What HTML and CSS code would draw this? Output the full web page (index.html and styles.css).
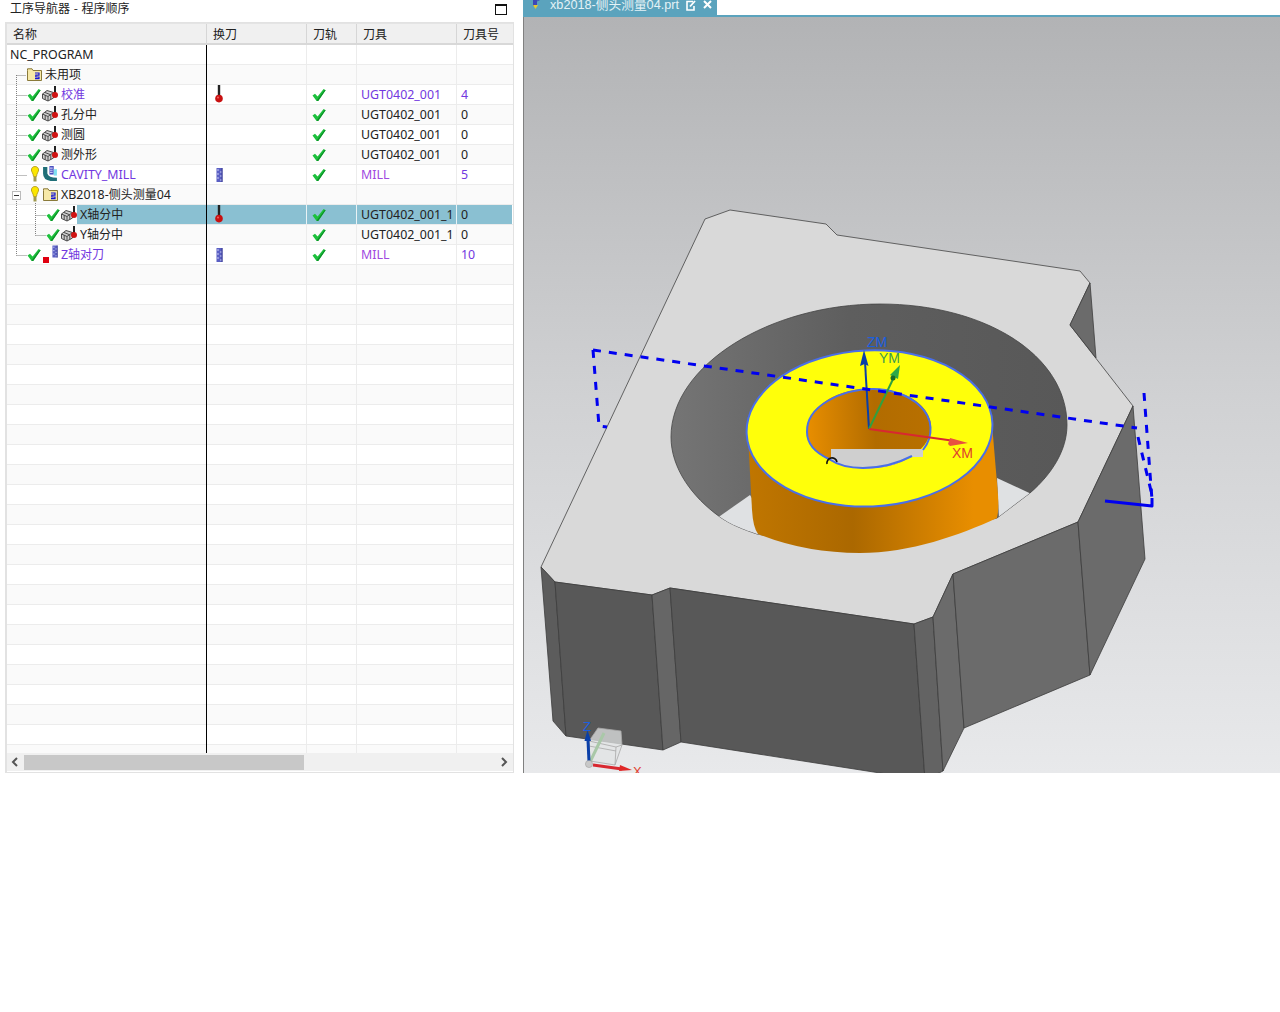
FILE: index.html
```html
<!DOCTYPE html>
<html lang="zh">
<head>
<meta charset="utf-8">
<title>工序导航器 - 程序顺序</title>
<link rel="stylesheet" href="styles.css">
</head>
<body>
<svg class="defs" width="0" height="0" aria-hidden="true">
  <defs>
    <symbol id="check" viewBox="0 0 14 14"><path d="M0.5 7.5 L3 5.8 L5.6 8.6 L11.6 1 L13.6 2.2 L6.2 13 L4.6 13 Z" fill="#1cc13c"/><path d="M4.6 13 L6.2 13 L13.6 2.2 L12.8 1.7 L5.6 11.2 Z" fill="#0c8f28"/></symbol>
    <symbol id="opcube" viewBox="0 0 16 16">
      <path d="M0.5 8 L5 4.5 L11.5 6.5 L11.5 12 L6 15 L0.5 12.5 Z" fill="#cfcfcf" stroke="#4a4a4a" stroke-width="1"/>
      <path d="M0.5 8 L6 10.5 L11.5 6.5 M6 10.5 L6 15 M3 6.5 L8.5 8.7 M3.2 9.2 L3.2 13.7 M8.8 8.6 L8.8 13.5" fill="none" stroke="#4a4a4a" stroke-width="1"/>
      <rect x="12" y="0" width="2" height="7" fill="#222"/>
      <circle cx="13" cy="9" r="3" fill="#d01414"/>
    </symbol>
    <symbol id="probe" viewBox="0 0 8 18"><rect x="2.8" y="0" width="2.4" height="11" fill="#222"/><circle cx="4" cy="13.6" r="3.8" fill="#c81010"/><circle cx="3" cy="12.6" r="1" fill="#f06060"/></symbol>
    <symbol id="mill" viewBox="0 0 7 14"><rect x="0.5" y="0" width="6" height="14" fill="#5a5fc4"/><path d="M1 2 H3 M4 4 H6 M1 6 H3 M4 8 H6 M1 10 H3 M4 12 H6" stroke="#c8ccf4" stroke-width="1"/><rect x="5.5" y="0" width="1" height="14" fill="#3c3f90"/></symbol>
    <symbol id="folder" viewBox="0 0 15 13"><path d="M0.5 2.5 L0.5 0.8 L5 0.8 L6 2.5 L14.5 2.5 L14.5 12.5 L0.5 12.5 Z" fill="#f7e9a8" stroke="#8a7a3a"/><path d="M8 5 H12 V7.2 H8.8 V9 H12 V10.6 H8" fill="none" stroke="#1414d8" stroke-width="1.2"/></symbol>
    <symbol id="bulb" viewBox="0 0 8 16"><path d="M4 0.5 C6.6 0.5 7.6 2.4 7.6 4 C7.6 6 5.8 7 5.5 10.5 L2.5 10.5 C2.2 7 0.4 6 0.4 4 C0.4 2.4 1.4 0.5 4 0.5 Z" fill="#fbe600" stroke="#a89018" stroke-width="0.8"/><rect x="2.5" y="11" width="3" height="4.5" fill="#a09a50"/></symbol>
    <symbol id="cavity" viewBox="0 0 15 15"><path d="M1 1 L5 1 L5 7 Q6 11 14 11 L14 14 L8 14 Q1 13 1 7 Z" fill="#1f6f78"/><rect x="7" y="0" width="4" height="8" fill="#4a50c0"/><path d="M7.5 2 H10 M7.5 4 H10 M7.5 6 H10" stroke="#c8ccf4"/><rect x="11" y="3" width="3" height="6" fill="#7fe0f0"/></symbol>
  </defs>
</svg>

<main class="app">
  <section class="navigator">
    <header class="nav-title">
      <span class="nav-title-text">工序导航器 - 程序顺序</span>
      <span class="maximize"></span>
    </header>
    <div class="grid">
      <div class="head row-cols">
        <div>名称</div><div>换刀</div><div>刀轨</div><div>刀具</div><div>刀具号</div>
      </div>
      <div class="rows">
        <svg class="tree-lines" width="40" height="220" aria-hidden="true">
          <path d="M9.5 30 V210.5 M9.5 30.5 H19 M9.5 50.5 H20 M9.5 70.5 H20 M9.5 90.5 H20 M9.5 110.5 H20 M9.5 130.5 H20 M9.5 210.5 H20 M28.5 158 V190.5 M28.5 170.5 H39 M28.5 190.5 H39" fill="none" stroke="#808080" stroke-dasharray="1 1"/>
        </svg>
        <span class="expander"></span>

        <div class="row row-cols"><div class="name root"><span class="label">NC_PROGRAM</span></div><div></div><div></div><div></div><div></div></div>
        <div class="row row-cols"><div class="name unused"><svg class="ic-folder"><use href="#folder"/></svg><span class="label cjk">未用项</span></div><div></div><div></div><div></div><div></div></div>
        <div class="row row-cols"><div class="name lvl2"><svg class="ic-check"><use href="#check"/></svg><svg class="ic-op"><use href="#opcube"/></svg><span class="label cjk purple">校准</span></div><div class="tc"><svg class="ic-probe"><use href="#probe"/></svg></div><div class="pc"><svg class="ic-check"><use href="#check"/></svg></div><div class="txt purple">UGT0402_001</div><div class="txt purple">4</div></div>
        <div class="row row-cols"><div class="name lvl2"><svg class="ic-check"><use href="#check"/></svg><svg class="ic-op"><use href="#opcube"/></svg><span class="label cjk">孔分中</span></div><div></div><div class="pc"><svg class="ic-check"><use href="#check"/></svg></div><div class="txt">UGT0402_001</div><div class="txt">0</div></div>
        <div class="row row-cols"><div class="name lvl2"><svg class="ic-check"><use href="#check"/></svg><svg class="ic-op"><use href="#opcube"/></svg><span class="label cjk">测圆</span></div><div></div><div class="pc"><svg class="ic-check"><use href="#check"/></svg></div><div class="txt">UGT0402_001</div><div class="txt">0</div></div>
        <div class="row row-cols"><div class="name lvl2"><svg class="ic-check"><use href="#check"/></svg><svg class="ic-op"><use href="#opcube"/></svg><span class="label cjk">测外形</span></div><div></div><div class="pc"><svg class="ic-check"><use href="#check"/></svg></div><div class="txt">UGT0402_001</div><div class="txt">0</div></div>
        <div class="row row-cols"><div class="name lvl2"><span class="slot"><svg class="ic-bulb"><use href="#bulb"/></svg></span><svg class="ic-op"><use href="#cavity"/></svg><span class="label purple">CAVITY_MILL</span></div><div class="tc"><svg class="ic-mill"><use href="#mill"/></svg></div><div class="pc"><svg class="ic-check"><use href="#check"/></svg></div><div class="txt purple2">MILL</div><div class="txt purple">5</div></div>
        <div class="row row-cols"><div class="name lvl2"><span class="slot"><svg class="ic-bulb"><use href="#bulb"/></svg></span><span class="ic-slot"><svg class="ic-folder"><use href="#folder"/></svg></span><span class="label mixed">XB2018-<span class="cjk">侧头测量</span>04</span></div><div></div><div></div><div></div><div></div></div>
        <div class="row row-cols selected"><div class="name lvl3"><svg class="ic-check"><use href="#check"/></svg><svg class="ic-op"><use href="#opcube"/></svg><span class="label mixed fill">X<span class="cjk">轴分中</span></span></div><div class="tc"><svg class="ic-probe"><use href="#probe"/></svg></div><div class="pc"><svg class="ic-check"><use href="#check"/></svg></div><div class="txt">UGT0402_001_1</div><div class="txt">0</div></div>
        <div class="row row-cols"><div class="name lvl3"><svg class="ic-check"><use href="#check"/></svg><svg class="ic-op"><use href="#opcube"/></svg><span class="label mixed">Y<span class="cjk">轴分中</span></span></div><div></div><div class="pc"><svg class="ic-check"><use href="#check"/></svg></div><div class="txt">UGT0402_001_1</div><div class="txt">0</div></div>
        <div class="row row-cols"><div class="name lvl2"><svg class="ic-check"><use href="#check"/></svg><span class="zmark"><span class="red-square"></span><svg class="ic-mill-sm"><use href="#mill"/></svg></span><span class="label mixed purple">Z<span class="cjk">轴对刀</span></span></div><div class="tc"><svg class="ic-mill"><use href="#mill"/></svg></div><div class="pc"><svg class="ic-check"><use href="#check"/></svg></div><div class="txt purple2">MILL</div><div class="txt purple">10</div></div>

        <div class="row row-cols"><div class="name"></div><div></div><div></div><div></div><div></div></div>
        <div class="row row-cols"><div class="name"></div><div></div><div></div><div></div><div></div></div>
        <div class="row row-cols"><div class="name"></div><div></div><div></div><div></div><div></div></div>
        <div class="row row-cols"><div class="name"></div><div></div><div></div><div></div><div></div></div>
        <div class="row row-cols"><div class="name"></div><div></div><div></div><div></div><div></div></div>
        <div class="row row-cols"><div class="name"></div><div></div><div></div><div></div><div></div></div>
        <div class="row row-cols"><div class="name"></div><div></div><div></div><div></div><div></div></div>
        <div class="row row-cols"><div class="name"></div><div></div><div></div><div></div><div></div></div>
        <div class="row row-cols"><div class="name"></div><div></div><div></div><div></div><div></div></div>
        <div class="row row-cols"><div class="name"></div><div></div><div></div><div></div><div></div></div>
        <div class="row row-cols"><div class="name"></div><div></div><div></div><div></div><div></div></div>
        <div class="row row-cols"><div class="name"></div><div></div><div></div><div></div><div></div></div>
        <div class="row row-cols"><div class="name"></div><div></div><div></div><div></div><div></div></div>
        <div class="row row-cols"><div class="name"></div><div></div><div></div><div></div><div></div></div>
        <div class="row row-cols"><div class="name"></div><div></div><div></div><div></div><div></div></div>
        <div class="row row-cols"><div class="name"></div><div></div><div></div><div></div><div></div></div>
        <div class="row row-cols"><div class="name"></div><div></div><div></div><div></div><div></div></div>
        <div class="row row-cols"><div class="name"></div><div></div><div></div><div></div><div></div></div>
        <div class="row row-cols"><div class="name"></div><div></div><div></div><div></div><div></div></div>
        <div class="row row-cols"><div class="name"></div><div></div><div></div><div></div><div></div></div>
        <div class="row row-cols"><div class="name"></div><div></div><div></div><div></div><div></div></div>
        <div class="row row-cols"><div class="name"></div><div></div><div></div><div></div><div></div></div>
        <div class="row row-cols"><div class="name"></div><div></div><div></div><div></div><div></div></div>
        <div class="row row-cols"><div class="name"></div><div></div><div></div><div></div><div></div></div>
        <div class="row row-cols"><div class="name"></div><div></div><div></div><div></div><div></div></div>
        <div class="row row-cols"><div class="name"></div><div></div><div></div><div></div><div></div></div>
      </div>
      <div class="scrollbar">
        <span class="arrow">
          <svg width="8" height="10" viewBox="0 0 8 10"><path d="M6 1 L2 5 L6 9" fill="none" stroke="#555" stroke-width="2"/></svg>
        </span>
        <div class="track"><div class="thumb"></div></div>
        <span class="arrow">
          <svg width="8" height="10" viewBox="0 0 8 10"><path d="M2 1 L6 5 L2 9" fill="none" stroke="#555" stroke-width="2"/></svg>
        </span>
      </div>
    </div>
  </section>

  <section class="graphics">
    <div class="tabbar">
      <div class="tab">
        <svg class="tab-icon" width="14" height="15" viewBox="0 0 14 15"><rect x="3" y="0" width="4" height="10" fill="#3d47b8"/><path d="M7 2 L13 0 M7 5 L11 3" stroke="#3d47b8"/><path d="M3 9 H8 L5.5 13 Z" fill="#e8c830"/></svg>
        <span class="tab-name">xb2018-<span class="tab-cjk">侧头测量</span>04.prt</span>
        <svg class="tab-pop" width="10" height="11" viewBox="0 0 10 11"><path d="M7 1.5 H1 V10 H8 V6" fill="none" stroke="#fff" stroke-width="1.6"/><path d="M4 6.5 L9 1" stroke="#fff" stroke-width="1.8"/></svg>
        <svg class="tab-close" width="9" height="9" viewBox="0 0 9 9"><path d="M1 1 L8 8 M8 1 L1 8" stroke="#fff" stroke-width="2"/></svg>
      </div>
    </div>
    <div class="viewport">
      <svg class="scene" viewBox="524 17 756 756" width="756" height="756">
        <defs>
          <linearGradient id="wall" gradientUnits="userSpaceOnUse" x1="671" y1="0" x2="1067" y2="0"><stop offset="0" stop-color="#757575"/><stop offset="0.45" stop-color="#5e5e5e"/><stop offset="1" stop-color="#585858"/></linearGradient>
          <linearGradient id="bossSide" gradientUnits="userSpaceOnUse" x1="748" y1="0" x2="998" y2="0"><stop offset="0" stop-color="#c07600"/><stop offset="0.42" stop-color="#ab6800"/><stop offset="0.9" stop-color="#e88e00"/><stop offset="1" stop-color="#e88e00"/></linearGradient>
          <linearGradient id="bossHole" gradientUnits="userSpaceOnUse" x1="807" y1="0" x2="931" y2="0"><stop offset="0" stop-color="#e88e00"/><stop offset="0.55" stop-color="#b26c00"/><stop offset="1" stop-color="#b87000"/></linearGradient>
          <clipPath id="holeClip"><path d="M671 437 C671 365 770 304 880 304 C985 304 1067 355 1067 425 C1067 450 1052 474 1030 493 L997 518 L860 552 L757 534 C742 529 730 524 720 517 C692 497 671 468 671 437 Z"/></clipPath>
          <clipPath id="boreClip"><ellipse cx="869" cy="428.5" rx="62" ry="40" transform="rotate(-2.5 869 428)"/></clipPath>
        </defs>

        <polygon class="face-top" points="705,219 730,210 826,224 837,235 1080,271 1090,283 1070,325 1133,406 1078,522 953,574 933,617 914,624 670,588 652,595 555,582 541,567"/>
        <polygon class="face f-a" points="541,567 555,582 566,736 553,721"/>
        <polygon class="face f-b" points="555,582 652,595 663,750 566,736"/>
        <polygon class="face f-c" points="652,595 670,588 681,742 663,750"/>
        <polygon class="face f-b" points="670,588 914,624 925,780 681,742"/>
        <polygon class="face f-d" points="914,624 933,617 943,771 925,780"/>
        <polygon class="face f-e" points="933,617 953,574 964,728 943,771"/>
        <polygon class="face f-e" points="953,574 1078,522 1090,675 964,728"/>
        <polygon class="face f-e" points="1078,522 1133,406 1145,559 1090,675"/>
        <polygon class="face f-e" points="1090,283 1070,325 1096,358"/>

        <path class="hole" d="M671 437 C671 365 770 304 880 304 C985 304 1067 355 1067 425 C1067 450 1052 474 1030 493 L997 518 L860 552 L757 534 C742 529 730 524 720 517 C692 497 671 468 671 437 Z"/>
        <g clip-path="url(#holeClip)">
          <polygon class="through" points="700,530 750,495 790,560"/>
          <polygon class="through" points="997,478 1040,498 1000,540"/>
        </g>

        <path class="boss-side" d="M748 436 L752 510 Q753 527 758 534 Q805 553 860 553 C910 553 960 535 997 518 Q999 510 998 495 L992 424 Z"/>
        <ellipse class="boss-top" cx="869.5" cy="428.5" rx="123" ry="78" transform="rotate(-2.5 869 428)"/>
        <ellipse class="bore" cx="869" cy="428.5" rx="62" ry="40" transform="rotate(-2.5 869 428)"/>
        <g clip-path="url(#boreClip)">
          <polygon class="slab" points="831,449 923,449 923,457 914,480 831,480"/>
        </g>
        <rect class="slab" x="831" y="449" width="92" height="8"/>
        <path class="bore-rim" d="M912 456 Q889 468 863 468 Q842 468 829 459"/>
        <path class="bore-rim" d="M923 450 C934 436 933 418 920 406 C908 394 888 389 873 389 C842 389 806 406 807 432 C807 444 816 453 829 459"/>
        <path class="notch" d="M827 464 A5 5 0 0 1 837 462"/>

        <line class="ax-z" x1="869" y1="429" x2="865" y2="362"/>
        <path class="fill-z" d="M864 350 L868.5 366 L864.6 364 L860 366 Z"/>
        <line class="ax-y" x1="869" y1="429" x2="895" y2="375"/>
        <path class="fill-y" d="M900 365 L898 379 L890 375 Z"/>
        <circle class="fill-yd" cx="893" cy="378" r="2.5"/>
        <line class="ax-x" x1="869" y1="429" x2="955" y2="441"/>
        <path class="fill-x" d="M968 443 L950 438 L948 444 L950 446 Z"/>
        <text class="lbl lbl-z" x="867" y="347">ZM</text>
        <text class="lbl lbl-y" x="879" y="363">YM</text>
        <text class="lbl lbl-x" x="952" y="458">XM</text>

        <path class="dash" d="M593 350 L1137 428"/>
        <path class="dash" d="M593 350 L599 426 L607 427"/>
        <path class="dash" d="M1144 393 L1152 500"/>
        <path class="dash" d="M1138 437 L1152 495"/>
        <path class="solid" d="M1105 501 L1152 506 L1152 498"/>

        <g class="triad">
          <path class="cube" d="M598 728 L621 731 L622 745 L615 765 L590 761 L589 741 Z"/>
          <path class="cube-l" d="M589 741 L616 747 L622 745 M616 747 L615 765 M589 746 L616 751"/>
          <line class="t-y" x1="590" y1="762" x2="604" y2="733"/>
          <line class="ax-z2" x1="589" y1="762" x2="588" y2="740"/>
          <path class="fill-z" d="M587.5 730 L591 741 L584.5 741 Z"/>
          <line class="ax-x2" x1="593" y1="765" x2="622" y2="769"/>
          <path class="fill-x2" d="M632 770 L620 765 L619 771 Z"/>
          <circle class="ball" cx="589" cy="764" r="3.6"/>
          <text class="lbl-t lbl-z" x="583" y="731">Z</text>
          <text class="lbl-t lbl-x" x="633" y="776">X</text>
        </g>
      </svg>
    </div>
  </section>
</main>
</body>
</html>
```
FILE: styles.css
```css
* { box-sizing: border-box; }
html, body { margin: 0; padding: 0; background: #fff; }
body {
  font-family: "Noto Sans", "Noto Sans CJK SC", sans-serif;
  font-size: 12.4px;
  color: #222;
}
.defs { position: absolute; }
.app { display: flex; height: 773px; }

.navigator { width: 523px; display: flex; flex-direction: column; padding: 0 9px 0 5px; }
.nav-title { height: 22px; display: flex; align-items: flex-start; justify-content: space-between; padding: 0 7px 0 5px; }
.nav-title-text { font-family: "Noto Sans CJK SC", sans-serif; font-size: 12px; line-height: 16px; color: #222; word-spacing: 1px; }
.maximize { width: 12px; height: 11px; border: 1px solid #111; border-top-width: 2px; margin-top: 4px; }

.grid { flex: 1; min-height: 0; display: flex; flex-direction: column; border: 1px solid #e2e2e2; border-left-width: 2px; }
.row-cols { display: grid; grid-template-columns: 200px 100px 50px 100px 55px; }
.head { height: 22px; flex: none; background: #f0f0f0; border-top: 1px solid #e4e4e4; border-bottom: 2px solid #d8d8d8; font-family: "Noto Sans CJK SC", sans-serif; font-size: 12px; color: #222; }
.head > div { padding-left: 6px; line-height: 19px; border-right: 1px solid #d6d6d6; }
.head > div:last-child { border-right: 0; }

.rows { position: relative; flex: 1; min-height: 0; overflow: hidden; }
.rows::after { content: ""; position: absolute; left: 199px; top: 0; bottom: 0; width: 1px; background: #000; }
.row { height: 20px; border-bottom: 1px solid #ececec; background: #fff; line-height: 19px; }
.row:nth-of-type(even) { background: #fafafa; }
.row > div { height: 19px; border-right: 1px solid #ececec; white-space: nowrap; overflow: hidden; }
.row > div:last-child { border-right: 0; }
.row > .name { display: flex; align-items: center; }
.row > .tc, .row > .pc { display: flex; align-items: center; }
.tc { padding-left: 8px; }
.pc { padding-left: 5px; }
.txt { padding-left: 4px; }

.root { padding-left: 3px; }
.unused { padding-left: 20px; }
.lvl2 { padding-left: 20px; }
.lvl3 { padding-left: 39px; }
.label { padding-left: 3px; line-height: 19px; }
.root .label { padding-left: 0; }
.cjk { font-family: "Noto Sans CJK SC", sans-serif; font-size: 12px; }
.label.cjk, .label.mixed { margin-top: -2px; }
.purple { color: #7238e0; }
.purple2 { color: #a048e0; }
.selected, .row.selected:nth-of-type(even) { background: #fff; }
.selected > div:not(.name) { background: #8ac0d2; border-right-color: #e8f2f5; }
.selected .fill { flex: 1; background: #8ac0d2; height: 19px; margin-top: 0; line-height: 17px; }

.ic-check { width: 14px; height: 14px; flex: none; }
.ic-op { width: 16px; height: 16px; flex: none; margin: -2px 0 0 1px; }
.ic-slot { width: 17px; flex: none; display: flex; justify-content: flex-end; }
.ic-folder { width: 15px; height: 13px; flex: none; }
.ic-probe { width: 8px; height: 18px; flex: none; margin-top: -1px; }
.ic-mill { width: 7px; height: 14px; flex: none; margin-left: 1px; }
.ic-bulb { width: 8px; height: 16px; display: block; margin: -2px auto 0; }
.slot { width: 14px; flex: none; padding-left: 1px; }
.zmark { width: 17px; height: 19px; flex: none; display: flex; align-items: flex-end; }
.red-square { width: 6px; height: 6px; background: #e00010; margin: 0 3px 1px 2px; flex: none; }
.ic-mill-sm { width: 6px; height: 13px; flex: none; margin-bottom: 6px; }

.tree-lines { position: absolute; left: 0; top: 0; pointer-events: none; }
.expander { position: absolute; left: 5px; top: 146px; width: 9px; height: 9px; background: #fff; border: 1px solid #bbb; }
.expander::after { content: ""; position: absolute; left: 1px; top: 3px; width: 5px; height: 1px; background: #333; }

.scrollbar { flex: none; height: 18px; display: flex; align-items: center; background: #f0f0f0; margin-bottom: 1px; }
.arrow { width: 17px; height: 16px; flex: none; display: flex; align-items: center; justify-content: center; padding-right: 2px; }
.track { flex: 1; height: 15px; }
.thumb { width: 280px; height: 15px; background: #c8c8c8; }

.graphics { flex: 1; min-width: 0; display: flex; flex-direction: column; }
.tabbar { height: 17px; flex: none; border-bottom: 2px solid #5ba3bd; }
.tab { width: 194px; height: 15px; background: #5ba3bd; display: flex; align-items: center; overflow: hidden; }
.tab-icon { margin: -8px 0 0 7px; flex: none; }
.tab-name { margin-left: 6px; color: #e4f2f6; font-family: "Liberation Sans", "Noto Sans CJK SC", sans-serif; font-size: 12.7px; line-height: 13px; margin-top: -6px; white-space: nowrap; }
.tab-cjk { font-family: "Noto Sans CJK SC", sans-serif; }
.tab-pop { margin-left: 7px; flex: none; margin-top: -4px; }
.tab-close { margin-left: 7px; flex: none; margin-top: -6px; }

.viewport { flex: 1; min-height: 0; overflow: hidden; border-left: 1px solid #808080; background: linear-gradient(#b2b3b5, #d0d1d3 50%, #e8e9eb); }
.scene { display: block; overflow: hidden; }

.face-top { fill: #d9d9d9; stroke: #444; stroke-width: 0.8; stroke-linejoin: round; }
.face { stroke: #3c3c3c; stroke-width: 0.8; stroke-linejoin: round; }
.f-a { fill: #5c5c5c; }
.f-b { fill: #585858; }
.f-c { fill: #666; }
.f-d { fill: #636363; }
.f-e { fill: #6b6b6b; }
.hole { fill: url(#wall); stroke: #444; stroke-width: 0.8; }
.through { fill: #dfe1e3; }
.boss-side { fill: url(#bossSide); }
.boss-top { fill: #ffff0a; stroke: #4a6fe8; stroke-width: 2; }
.bore { fill: url(#bossHole); }
.slab { fill: #cfcfcf; }
.bore-rim { fill: none; stroke: #4a6fe8; stroke-width: 2; }
.notch { fill: none; stroke: #111; stroke-width: 1.6; }

.ax-z, .ax-z2 { stroke: #0a3fa8; stroke-width: 2; }
.ax-y { stroke: #30a040; stroke-width: 2; }
.ax-x, .ax-x2 { stroke: #d82830; stroke-width: 2; }
.ax-x2 { stroke-width: 3; }
.ax-z2 { stroke-width: 3; }
.fill-z { fill: #0a3fa8; }
.fill-y { fill: #30a848; }
.fill-yd { fill: #1c6a28; }
.fill-x { fill: #e85040; }
.fill-x2 { fill: #e02828; }
.lbl, .lbl-t { font-family: "Liberation Sans", sans-serif; font-size: 14px; }
.lbl-t { font-size: 13px; }
.lbl-z { fill: #1a5fe0; }
.lbl-y { fill: #3c9a50; }
.lbl-x { fill: #e04030; }
.dash { fill: none; stroke: #0000f0; stroke-width: 3; stroke-dasharray: 8 8; }
.solid { fill: none; stroke: #0000f0; stroke-width: 3; stroke-linejoin: round; }
.cube { fill: rgba(225, 228, 228, 0.75); stroke: #a8a8a8; stroke-width: 0.8; }
.cube-l { fill: none; stroke: #a8a8a8; stroke-width: 0.8; }
.t-y { stroke: #a9c8a8; stroke-width: 3; }
.ball { fill: #c8c8c8; stroke: #999; stroke-width: 0.5; }
```
